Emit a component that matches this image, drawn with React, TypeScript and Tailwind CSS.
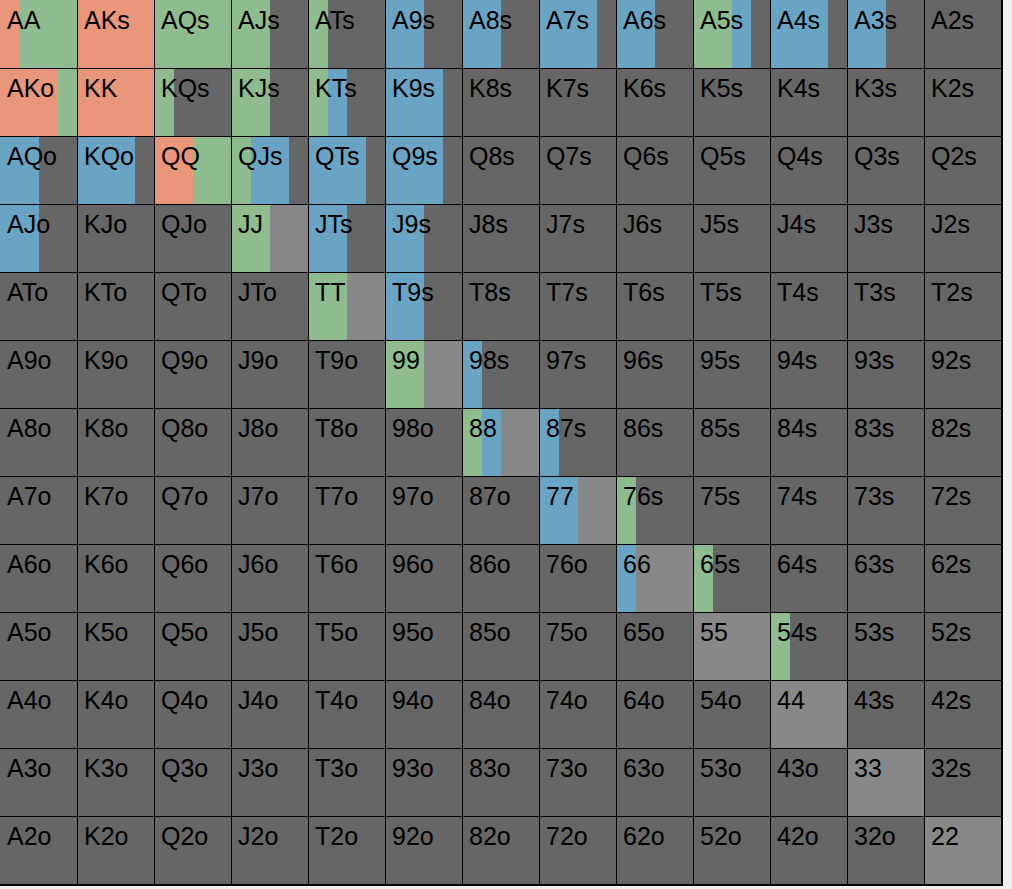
import React from 'react';

const RANKS = ['A', 'K', 'Q', 'J', 'T', '9', '8', '7', '6', '5', '4', '3', '2'];

type Action = 'raise' | 'call' | 'limp' | 'check';

const COLORS: Record<Action, string> = {
  raise: 'bg-[#e9967a]',
  call: 'bg-[#8fbc8f]',
  limp: 'bg-[#6aa4c4]',
  check: 'bg-[#888888]',
};

// fraction of each hand per action, left to right
const RANGE: Record<string, [Action, number][]> = {
  AA: [['raise', 0.25], ['call', 0.75]],
  AKs: [['raise', 1]],
  AQs: [['call', 1]],
  AJs: [['call', 0.5]],
  ATs: [['call', 0.25]],
  A9s: [['limp', 0.5]],
  A8s: [['limp', 0.5]],
  A7s: [['limp', 0.75]],
  A6s: [['limp', 0.5]],
  A5s: [['call', 0.5], ['limp', 0.25]],
  A4s: [['limp', 0.75]],
  A3s: [['limp', 0.5]],
  AKo: [['raise', 0.75], ['call', 0.25]],
  KK: [['raise', 1]],
  KQs: [['call', 0.25]],
  KJs: [['call', 0.5]],
  KTs: [['call', 0.25], ['limp', 0.25]],
  K9s: [['limp', 0.75]],
  AQo: [['limp', 0.5]],
  KQo: [['limp', 0.75]],
  QQ: [['raise', 0.5], ['call', 0.5]],
  QJs: [['call', 0.25], ['limp', 0.5]],
  QTs: [['limp', 0.75]],
  Q9s: [['limp', 0.75]],
  AJo: [['limp', 0.5]],
  JJ: [['call', 0.5], ['check', 0.5]],
  JTs: [['limp', 0.5]],
  J9s: [['limp', 0.5]],
  TT: [['call', 0.5], ['check', 0.5]],
  T9s: [['limp', 0.5]],
  '99': [['call', 0.5], ['check', 0.5]],
  '98s': [['limp', 0.25]],
  '88': [['call', 0.25], ['limp', 0.25], ['check', 0.5]],
  '87s': [['limp', 0.25]],
  '77': [['limp', 0.5], ['check', 0.5]],
  '76s': [['call', 0.25]],
  '66': [['limp', 0.25], ['check', 0.75]],
  '65s': [['call', 0.25]],
  '55': [['check', 1]],
  '54s': [['call', 0.25]],
  '44': [['check', 1]],
  '33': [['check', 1]],
  '22': [['check', 1]],
};

function handName(row: number, col: number) {
  if (row === col) return RANKS[row] + RANKS[col];
  if (col > row) return RANKS[row] + RANKS[col] + 's';
  return RANKS[col] + RANKS[row] + 'o';
}

function Cell({ row, col }: { row: number; col: number }) {
  const hand = handName(row, col);
  const parts = RANGE[hand] || [];
  return (
    <div
      className={`relative flex border-r border-b border-black bg-[#666666] ${
        col === 0 ? 'w-[78px]' : 'w-[77px]'
      } ${row === 0 ? 'h-[69px]' : 'h-[68px]'}`}
    >
      {parts.map(([action, frac], i) => (
        <div key={i} className={`h-full ${COLORS[action]}`} style={{ width: `${frac * 100}%` }} />
      ))}
      <span
        className={`absolute text-[25px] leading-normal text-black ${col === 0 ? 'left-[7px]' : 'left-[6px]'} ${
          row === 0 ? 'top-[2px]' : 'top-[1px]'
        }`}
      >
        {hand}
      </span>
    </div>
  );
}

export default function App() {
  return (
    <div className="min-h-screen bg-[#f0f0f0] font-['Liberation_Sans',Arial,sans-serif]">
      <div className="flex w-fit flex-col border-r border-b border-black">
        {RANKS.map((_, row) => (
          <div key={row} className="flex">
            {RANKS.map((_, col) => (
              <Cell key={col} row={row} col={col} />
            ))}
          </div>
        ))}
      </div>
    </div>
  );
}
